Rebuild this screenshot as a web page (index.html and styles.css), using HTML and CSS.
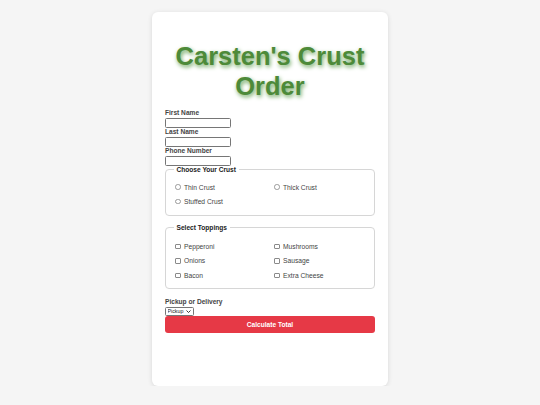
FILE: index.html
```html
<!DOCTYPE html>
<html>
<head>
<meta charset="utf-8">
<link rel="stylesheet" href="styles.css">
</head>
<body>
<div class="card">
  <h1 class="title">Carsten's Crust Order</h1>
  <form class="form">
    <label class="field-label" for="fn">First Name</label>
    <input class="text-input" id="fn" type="text">
    <label class="field-label" for="ln">Last Name</label>
    <input class="text-input" id="ln" type="text">
    <label class="field-label" for="ph">Phone Number</label>
    <input class="text-input" id="ph" type="text">

    <fieldset class="group crust">
      <legend class="legend">Choose Your Crust</legend>
      <div class="options">
        <label class="opt"><input class="radio" type="radio" name="crust"><span>Thin Crust</span></label>
        <label class="opt"><input class="radio" type="radio" name="crust"><span>Thick Crust</span></label>
        <label class="opt"><input class="radio" type="radio" name="crust"><span>Stuffed Crust</span></label>
      </div>
    </fieldset>

    <fieldset class="group toppings">
      <legend class="legend">Select Toppings</legend>
      <div class="options">
        <label class="opt"><input class="check" type="checkbox"><span>Pepperoni</span></label>
        <label class="opt"><input class="check" type="checkbox"><span>Mushrooms</span></label>
        <label class="opt"><input class="check" type="checkbox"><span>Onions</span></label>
        <label class="opt"><input class="check" type="checkbox"><span>Sausage</span></label>
        <label class="opt"><input class="check" type="checkbox"><span>Bacon</span></label>
        <label class="opt"><input class="check" type="checkbox"><span>Extra Cheese</span></label>
      </div>
    </fieldset>

    <label class="field-label pickup-label" for="pd">Pickup or Delivery</label>
    <span class="select-wrap">
      <select class="select" id="pd">
        <option>Pickup</option>
        <option>Delivery</option>
      </select>
      <svg class="chev" viewBox="0 0 10 6" width="5" height="3"><path d="M1 1 L5 5 L9 1" fill="none" stroke="#222" stroke-width="1.8"/></svg>
    </span>
    <button class="btn" type="button">Calculate Total</button>
  </form>
</div>
</body>
</html>
```

FILE: styles.css
```css
* { box-sizing: border-box; }
html, body { margin: 0; padding: 0; }
body {
  background: #f5f5f5;
  font-family: "Liberation Sans", Arial, sans-serif;
  color: #333;
  padding-top: 12px;
}
.card {
  width: 236px;
  min-height: 374px;
  margin: 0 auto;
  background: #fff;
  border-radius: 6px;
  box-shadow: 0 1px 5px rgba(0,0,0,0.12);
  padding: 13px;
}
.title {
  margin: 17px 0 8px;
  text-align: center;
  font-size: 25.5px;
  font-weight: bold;
  line-height: 29.5px;
  color: #4d8a39;
  text-shadow: 1px 2px 4px #6aa45a;
}
.form { display: flex; flex-direction: column; align-items: flex-start; }
.field-label {
  display: block;
  font-size: 6.6px;
  font-weight: bold;
  line-height: 8px;
  margin-bottom: 1px;
  color: #444;
}
.text-input {
  width: 66px;
  height: 9.5px;
  border: 0.8px solid #767676;
  border-radius: 1.5px;
  padding: 0;
  margin: 0 0 0.5px;
  font-size: 6px;
}
.group {
  width: 210px;
  min-width: 0;
  border: 0.8px solid #d6d6d6;
  border-radius: 4px;
  margin: 0;
  padding: 7px 9px 6px;
  align-self: stretch;
}
.crust { margin-top: 0; }
.toppings { margin-top: 8px; padding-top: 8.5px; }
.legend {
  font-size: 6.6px;
  font-weight: bold;
  padding: 0 3px;
  margin-left: -1.5px;
  color: #222;
}
.options {
  display: grid;
  grid-template-columns: 99px 1fr;
}
.opt {
  display: flex;
  align-items: center;
  height: 14.4px;
  font-size: 6.7px;
  color: #444;
}
.radio, .check {
  appearance: none;
  -webkit-appearance: none;
  width: 5.5px;
  height: 5.5px;
  margin: 0 3.5px 0 0;
  border: 0.6px solid #9a9a9a;
  background: #fff;
  flex: none;
}
.radio { border-radius: 50%; }
.check { border-radius: 1px; border-color: #8a8a8a; }
.pickup-label { margin-top: 9px; margin-bottom: 0.5px; }
.select-wrap {
  position: relative;
  display: inline-block;
  width: 29px;
  height: 9.5px;
}
.select {
  appearance: none;
  -webkit-appearance: none;
  display: block;
  width: 29px;
  height: 9.5px;
  font-size: 5.3px;
  line-height: 7px;
  padding: 0 0 0 1.5px;
  margin: 0;
  border: 0.8px solid #767676;
  border-radius: 1.5px;
  background: #fff;
  color: #222;
  font-family: "Liberation Sans", Arial, sans-serif;
}
.chev {
  position: absolute;
  right: 3px;
  top: 3.2px;
  pointer-events: none;
}
.btn {
  align-self: stretch;
  height: 17px;
  margin: 0;
  border: none;
  border-radius: 3px;
  background: #e63946;
  color: #fff;
  font-family: "Liberation Sans", Arial, sans-serif;
  font-weight: bold;
  font-size: 6.6px;
}
```
